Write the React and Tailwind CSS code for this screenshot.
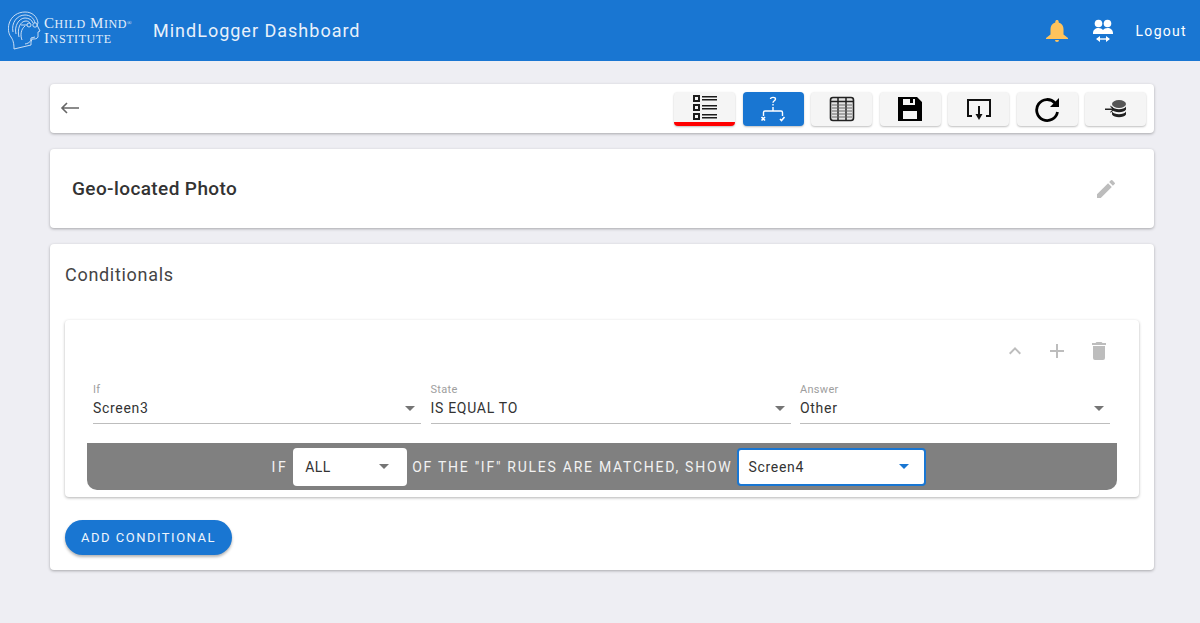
const Caret = ({ className = 'border-t-[#757575]' }) => (
  <span className={`w-0 h-0 border-x-[5px] border-x-transparent border-t-[5px] ${className}`} />
);

const Logo = () => (
  <svg width="38" height="40" viewBox="0 0 38 40" fill="none" stroke="#dbe8f7" strokeWidth="0.900">
    <path d="M6 38C6 32 5 29 3 26 0 22 0 17 1 13 3 5 10 1 17 1c7 0 12 4 13 11l-1 2 3 6-2 1 0 5c-1 2-3 2-6 2l-1 3 0 3-17 4z" />
    <path d="M5 21C3 12 9 4 17 4c5 0 9 3 10 8" />
    <path d="M8 23C6 15 11 7 17 7c4 0 7 2 8 5" />
    <path d="M11 26C9 18 12 10 18 10c2 0 3 1 4 2" />
    <path d="M14 29c-2-5-1-11 3-14M17 33c5-1 6-3 6-6l4-1" />
    <circle cx="21" cy="14" r="2" />
    <circle cx="27" cy="14" r="2.200" />
    <path d="M13 14h6" />
  </svg>
);

const ArrowBack = () => (
  <svg width="20" height="14" viewBox="0 0 20 14" fill="none" stroke="#666" strokeWidth="1.600">
    <path d="M2 7h17M7 2L2 7l5 5" />
  </svg>
);

const ListIcon = () => (
  <svg width="26" height="26" viewBox="0 0 26 26" fill="#1c1c1c">
    <path fillRule="evenodd" d="M1 1h7v7H1zM3 3v3h3V3zM1 10h7v7H1zM3 12v3h3v-3zM1 19h7v7H1zM3 21v3h3v-3z" />
    <path d="M10 2h15v1.500H10zM10 5h15v1.500H10zM10 11h15v1.500H10zM10 14h15v1.500H10zM10 20h15v1.500H10zM10 23h15v1.500H10z" />
  </svg>
);

const BranchIcon = () => (
  <svg width="26" height="26" viewBox="0 0 26 26" fill="none" stroke="#fff" strokeWidth="1.400">
    <path d="M10.500 3c0-2.200 5-2.200 5 0 0 1.700-2.500 1.800-2.500 3.800M13 8v1.500" />
    <path d="M13 11v4M3.500 20v-3.500c0-1 .5-1.500 1.500-1.500h16c1 0 1.500.5 1.500 1.500V20" />
    <path d="M1.500 21l3.500 3.500m0-3.500l-3.500 3.500M20 23l1.500 1.500 3-3.500" strokeWidth="1.600" />
  </svg>
);

const TableIcon = () => (
  <svg width="26" height="26" viewBox="0 0 26 26" fill="none">
    <rect x="1.500" y="1.500" width="23" height="23" rx="2.500" stroke="#222" strokeWidth="1.600" fill="#e4e4e4" />
    <path d="M1.500 5.500h23M9 1.500v23M17 1.500v23" stroke="#222" strokeWidth="1.500" />
    <path d="M3 9h20M3 12h20M3 15h20M3 18h20M3 21h20" stroke="#666" strokeWidth="1.200" />
  </svg>
);

const SaveIcon = () => (
  <svg width="26" height="26" viewBox="0 0 26 26" fill="#000">
    <path fillRule="evenodd" d="M1 1h19l5 5v19H1zM6 3v6h12V3h-2v4h-3V3zM6 15v8h14v-8z" />
  </svg>
);

const UploadIcon = () => (
  <svg width="26" height="26" viewBox="0 0 26 26" fill="none" stroke="#111" strokeWidth="2">
    <path d="M6 20H2V4h22v16h-4" />
    <path d="M13 10v11" />
    <path d="M9.500 18h7L13 24z" fill="#111" stroke="none" />
  </svg>
);

const RefreshIcon = () => (
  <svg width="26" height="26" viewBox="0 0 26 26" fill="none">
    <path d="M21 7a10.500 10.500 0 1 0 2.500 9" stroke="#000" strokeWidth="2.800" />
    <path d="M25 2v9h-9z" fill="#000" />
  </svg>
);

const DbIcon = () => (
  <svg width="24" height="24" viewBox="0 0 24 24" fill="#222">
    <ellipse cx="15" cy="7" rx="7" ry="4" fill="#555" />
    <path d="M8 9.500c2 3.500 12 3.500 14 0v3c-2 3.500-12 3.500-14 0zM8 14.500c2 3.500 12 3.500 14 0v3c-2 3.500-12 3.500-14 0z" />
    <path d="M1 11.500h8v1.400H1zM6.500 8.500l4 3.700-4 3.700v-1.400l2.500-2.300-2.500-2.300z" />
  </svg>
);

const BellIcon = () => (
  <svg width="24" height="24" viewBox="0 0 24 24" fill="#ffc35c">
    <path d="M12 1c1 0 1.700.7 1.700 1.700v.7C17 4.200 18.500 7 18.500 10v5.500L23 19v1H1v-1l4.500-3.500V10c0-3 1.500-5.800 4.800-6.600v-.7C10.300 1.700 11 1 12 1zM10 21h4a2 2 0 0 1-4 0z" />
  </svg>
);

const PeopleIcon = () => (
  <svg width="22" height="24" viewBox="0 0 22 24" fill="#fff">
    <circle cx="6.500" cy="4.500" r="3.800" />
    <circle cx="15.500" cy="4.500" r="3.800" />
    <path d="M1 14c0-3 2.500-5 5.500-5 2 0 3.500.8 4.500 2 1-1.200 2.500-2 4.500-2 3 0 5.500 2 5.500 5v1H1z" />
    <path d="M5 19.300h12v1.400H5z" />
    <path d="M8 17v6l-4-3zM14 17v6l4-3z" />
  </svg>
);

const TrashIcon = () => (
  <svg width="24" height="24" viewBox="0 0 24 24" fill="#bdbdbd">
    <path d="M6 19a2 2 0 0 0 2 2h8a2 2 0 0 0 2-2V7H6zM19 4h-3.500l-1-1h-5l-1 1H5v2h14z" />
  </svg>
);

const ChevronIcon = () => (
  <svg width="24" height="24" viewBox="0 0 24 24" fill="#bdbdbd">
    <path d="M12 8l-6 6 1.410 1.410L12 10.830l4.590 4.580L18 14z" />
  </svg>
);

const PlusIcon = () => (
  <svg width="24" height="24" viewBox="0 0 24 24" fill="#bdbdbd">
    <path d="M19 13h-6v6h-2v-6H5v-2h6V5h2v6h6z" />
  </svg>
);

const PencilIcon = () => (
  <svg width="24" height="24" viewBox="0 0 24 24" fill="#bdbdbd">
    <path d="M3 17.250V21h3.750L17.810 9.940l-3.750-3.750zM20.710 7.040a1 1 0 0 0 0-1.410l-2.340-2.340a1 1 0 0 0-1.410 0l-1.830 1.830 3.750 3.750z" />
  </svg>
);

const tools = [
  { icon: <ListIcon />, name: 'list', active: true },
  { icon: <BranchIcon />, name: 'branch', selected: true },
  { icon: <TableIcon />, name: 'table' },
  { icon: <SaveIcon />, name: 'save' },
  { icon: <UploadIcon />, name: 'upload' },
  { icon: <RefreshIcon />, name: 'refresh' },
  { icon: <DbIcon />, name: 'db' },
];

const Field = ({ label, value, className }) => (
  <div className={className}>
    <div className="text-[11px] leading-[13px] tracking-[0.300px] text-[#9e9e9e]">{label}</div>
    <div className="flex h-[28px] items-center justify-between border-b border-[#bdbdbd] pb-[4px] pr-[6px] pt-[1px]">
      <span className="text-sm tracking-[0.700px] text-[#333]">{value}</span>
      <Caret />
    </div>
  </div>
);

export default function App() {
  return (
    <div className="min-h-[623px] bg-[#eeeef3] font-['Roboto',sans-serif]">
      <header className="flex h-[61px] items-center justify-between bg-[#1976d2] pl-2 pr-[13px] text-white">
        <div className="flex items-center">
          <Logo />
          <div className="-ml-[2px] w-[103px] font-['Liberation_Serif',serif] text-[15px] leading-[14px] tracking-[0.600px] text-[#e3eefa]">
            <div>C<span className="text-[12px]">HILD</span> M<span className="text-[12px]">IND</span><sup className="text-[6px]">®</sup></div>
            <div>I<span className="text-[12px]">NSTITUTE</span></div>
          </div>
          <h1 className="ml-[6px] text-lg font-normal tracking-[1px] text-[#e8f1fb]">MindLogger Dashboard</h1>
        </div>
        <div className="flex items-center">
          <BellIcon />
          <div className="ml-[23px]"><PeopleIcon /></div>
          <span className="ml-[22px] text-sm tracking-[1.300px]">Logout</span>
        </div>
      </header>

      <main className="flex flex-col gap-[16px] pl-[50px] pr-[46px] pt-[23px]">
        <section className="flex h-[49px] items-center justify-between rounded-[4px] bg-white pl-[10px] pr-[8px] shadow-[0_1px_3px_rgba(0,0,0,0.3)]">
          <span className="-mt-[2px]"><ArrowBack /></span>
          <div className="flex gap-[7.500px]">
            {tools.map(tool => (
              <button
                key={tool.name}
                className={`flex h-[34px] w-[61px] items-center justify-center rounded-[4px] shadow-[0_1px_2px_rgba(0,0,0,0.25)] ${
                  tool.selected ? 'bg-[#1976d2]' : 'bg-[#f5f5f5]'
                } ${tool.active ? 'border-b-[4px] border-[#f00]' : ''}`}
              >
                {tool.icon}
              </button>
            ))}
          </div>
        </section>

        <section className="flex h-[79px] items-center justify-between rounded-[4px] bg-white pl-[22px] pr-[36px] shadow-[0_1px_3px_rgba(0,0,0,0.3)]">
          <h2 className="pt-[2px] text-[19px] font-medium tracking-[0.400px] text-[#333]">Geo-located Photo</h2>
          <PencilIcon />
        </section>

        <section className="h-[326px] rounded-[4px] bg-white px-[15px] pt-[20px] shadow-[0_1px_3px_rgba(0,0,0,0.3)]">
          <h3 className="text-lg font-normal leading-[22px] tracking-[0.700px] text-[#444]">Conditionals</h3>

          <div className="mt-[34px] h-[177px] rounded-[4px] bg-white px-[22px] pt-[19px] shadow-[0_1px_3px_rgba(0,0,0,0.3)]">
            <div className="flex h-[24px] items-center justify-end gap-[18px] pr-[6px]">
              <ChevronIcon />
              <PlusIcon />
              <TrashIcon />
            </div>
            <div className="mt-[20px] flex gap-[9.500px] px-[6px]">
              <Field label="If" value="Screen3" className="w-[328px]" />
              <Field label="State" value="IS EQUAL TO" className="w-[360px]" />
              <Field label="Answer" value="Other" className="w-[310px]" />
            </div>
            <div className="mt-[19px] flex h-[47px] items-center justify-center gap-[5px] rounded-b-[10px] bg-[#808080] pr-[6px] text-sm tracking-[1.740px] text-[#f2f2f2]">
              <span className="tracking-[2.500px]">IF</span>
              <div className="flex h-[38px] w-[114px] items-center justify-between rounded-[4px] bg-white pl-3 pr-[18px] tracking-[0.500px] text-[#333]">
                <span>ALL</span>
                <Caret />
              </div>
              <span>OF THE "IF" RULES ARE MATCHED, SHOW</span>
              <div className="flex h-[38px] w-[189px] items-center justify-between rounded-[4px] border-2 border-[#1976d2] bg-white pl-[9px] pr-[15px] tracking-[0.700px] text-[#333]">
                <span>Screen4</span>
                <Caret className="border-t-[#1976d2]" />
              </div>
            </div>
          </div>

          <button className="mt-[23px] h-[35px] w-[167px] rounded-full bg-[#1976d2] text-[13px] tracking-[1.500px] text-[#eef5fc] shadow-[0_2px_3px_rgba(0,0,0,0.3)]">
            ADD CONDITIONAL
          </button>
        </section>
      </main>
    </div>
  );
}
